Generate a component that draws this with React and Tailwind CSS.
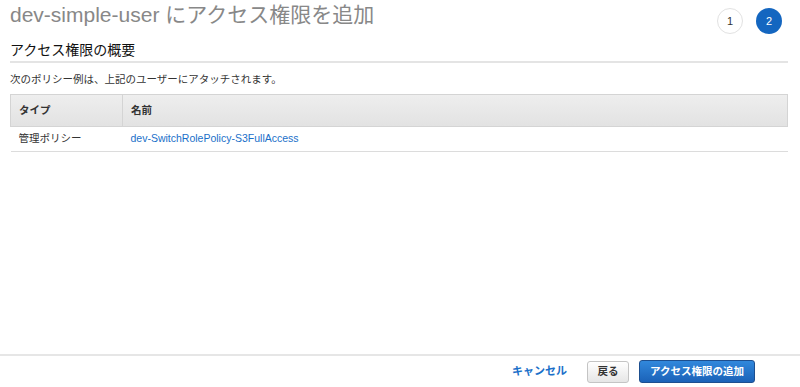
import React from "react";

const font = { fontFamily: '"Liberation Sans", "Noto Sans CJK JP", sans-serif' };

function StepCircle({ n, active }) {
  return (
    <div
      className={`flex h-[26px] w-[26px] items-center justify-center rounded-full text-[11px] ${
        active
          ? "bg-[#1466c0] text-white"
          : "border border-[#e2e2e2] bg-white text-[#333]"
      }`}
    >
      {n}
    </div>
  );
}

export default function App() {
  return (
    <div className="flex h-[387px] w-[800px] flex-col bg-white text-[#222]" style={font}>
      <div className="flex-1 px-[10px] pr-[12px]">
        <div className="flex items-start justify-between">
          <h1 className="pt-[1px] text-[21px] leading-[28px] text-[#888]">
            dev-simple-user にアクセス権限を追加
          </h1>
          <div className="mt-[8px] flex gap-[13px] pr-[6px]">
            <StepCircle n="1" />
            <StepCircle n="2" active />
          </div>
        </div>

        <h2 className="mt-[8px] border-b-2 border-[#e4e4e4] pb-[2px] text-[14px] leading-[17px] text-[#111]">
          アクセス権限の概要
        </h2>

        <p className="mt-[9px] text-[10.5px] leading-[14px] text-[#333]">
          次のポリシー例は、上記のユーザーにアタッチされます。
        </p>

        <table className="mt-[8px] w-full border-collapse text-[10.5px]">
          <thead>
            <tr className="bg-gradient-to-b from-[#eeeeee] to-[#e2e2e2]">
              <th className="h-[32px] w-[112px] border border-[#d4d4d4] pl-[8px] text-left font-bold text-[#333]">
                タイプ
              </th>
              <th className="h-[32px] border border-[#d4d4d4] pl-[8px] text-left font-bold text-[#333]">
                名前
              </th>
            </tr>
          </thead>
          <tbody>
            <tr className="border-b border-[#dcdcdc]">
              <td className="h-[25px] pl-[8px] text-[#333]">管理ポリシー</td>
              <td className="h-[25px] pl-[8px]">
                <a className="text-[#1a6fc9]" href="#">
                  dev-SwitchRolePolicy-S3FullAccess
                </a>
              </td>
            </tr>
          </tbody>
        </table>
      </div>

      <div className="flex h-[33px] items-center justify-end border-t-2 border-[#e6e6e6] pr-[45px]">
        <a href="#" className="mr-[20px] text-[11px] font-bold text-[#1a6fc9]">
          キャンセル
        </a>
        <button className="mr-[10px] h-[22px] w-[42px] rounded-[3px] border border-[#c4c4c4] bg-gradient-to-b from-[#ffffff] to-[#e6e6e6] text-[10.5px] font-bold text-[#333]">
          戻る
        </button>
        <button className="h-[23px] w-[116px] rounded-[3px] border border-[#1d4f8f] bg-gradient-to-b from-[#3188dc] to-[#1b62b8] text-[10.5px] font-bold text-white">
          アクセス権限の追加
        </button>
      </div>
    </div>
  );
}
